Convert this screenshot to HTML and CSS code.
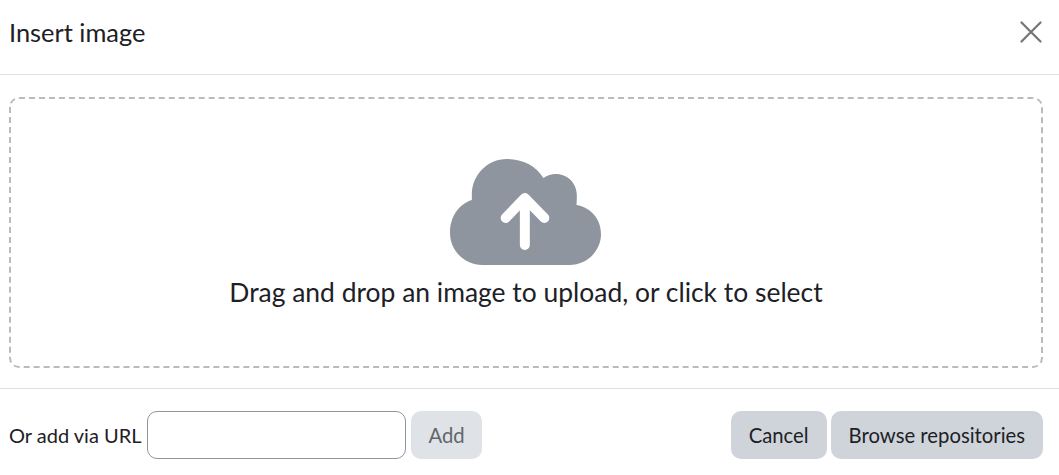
FILE: index.html
```html
<!DOCTYPE html>
<html lang="en">
<head>
    <meta charset="UTF-8">
    <meta name="viewport" content="width=device-width, initial-scale=1.0">
    <title>Insert image</title>
    <link rel="stylesheet" href="styles.css">
</head>
<body>
    <div class="dialog">
        <div class="dialog-header">
            <h2>Insert image</h2>
            <button class="close" aria-label="Close">
                <svg width="22" height="22" viewBox="0 0 22 22">
                    <path d="M1.5 1.5 L20.5 20.5 M20.5 1.5 L1.5 20.5" stroke="#757575" stroke-width="2.2" stroke-linecap="round" fill="none"/>
                </svg>
            </button>
        </div>

        <div class="dialog-body">
            <div class="dropzone">
                <svg class="cloud" width="151" height="106" viewBox="90 55 456 318" preserveAspectRatio="none">
                    <path d="M188 373 C134 373 90 330 90 276 C90 230 116 190 156 178 C156 175 156 165 156 162 C156 103 203 55 262 55 C308 55 350 75 372 112 C384 104 396 100 410 100 C445 100 473 128 473 163 C473 172 473 185 472 193 C515 200 546 235 546 280 C546 330 505 373 450 373 Z" fill="#8f959e"/>
                    <path d="M316 175 L316 313 M258 232 L316 172 L375 232" stroke="#fff" stroke-width="30" stroke-linecap="round" stroke-linejoin="round" fill="none"/>
                </svg>
                <p>Drag and drop an image to upload, or click to select</p>
            </div>
        </div>

        <div class="dialog-footer">
            <div class="url-group">
                <label for="url">Or add via URL</label>
                <input type="text" id="url">
                <button class="btn btn-disabled">Add</button>
            </div>
            <div class="actions">
                <button class="btn">Cancel</button>
                <button class="btn">Browse repositories</button>
            </div>
        </div>
    </div>
</body>
</html>
```

FILE: styles.css
```css
body {
    font-family: Lato, sans-serif;
    margin: 0;
    background: #fff;
    color: #1d2125;
}
.dialog {
    width: 1059px;
}
.dialog-header {
    display: flex;
    justify-content: space-between;
    align-items: center;
    box-sizing: border-box;
    height: 75px;
    padding: 0 17px 10px 9px;
    border-bottom: 1px solid #dee2e6;
}
h2 {
    margin: 0;
    font-size: 25.4px;
    font-weight: 400;
}
.close {
    display: flex;
    padding: 0;
    border: none;
    background: none;
}
.dialog-body {
    padding: 22px 16px 20px 9px;
    border-bottom: 1px solid #dee2e6;
}
.dropzone {
    display: flex;
    flex-direction: column;
    align-items: center;
    box-sizing: border-box;
    height: 271px;
    padding-top: 60px;
    border: 2px dashed #bbb;
    border-radius: 10px;
}
.cloud {
    display: block;
    margin-right: 2px;
}
.dropzone p {
    margin: 11px 0 0;
    font-size: 26.45px;
}
.dialog-footer {
    display: flex;
    justify-content: space-between;
    align-items: center;
    padding: 22px 16px 16px 9px;
}
.url-group {
    display: flex;
    align-items: center;
    gap: 5px;
}
label {
    margin-right: 1px;
    font-size: 20px;
}
input {
    box-sizing: border-box;
    width: 259px;
    height: 48px;
    border: 1px solid #8f959e;
    border-radius: 10px;
}
.actions {
    display: flex;
    gap: 4px;
}
.btn {
    height: 48px;
    padding: 0 18px;
    border: none;
    border-radius: 10px;
    background: #ced4da;
    color: #1d2125;
    font-family: Lato, sans-serif;
    font-size: 20.3px;
}
.btn-disabled {
    padding: 0 17px;
    background: #dfe2e6;
    color: #62666a;
}
```
